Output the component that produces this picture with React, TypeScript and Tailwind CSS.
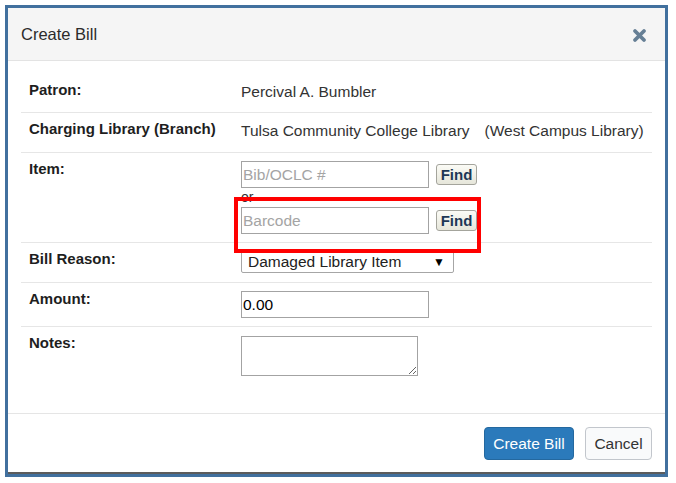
const font = { fontFamily: '"Liberation Sans", Arial, sans-serif' }

function Row({
  label,
  h,
  lpt,
  vpt,
  last = false,
  children,
}: {
  label: string
  h: string
  lpt: string
  vpt: string
  last?: boolean
  children: React.ReactNode
}) {
  return (
    <div className={`flex ${h} ${last ? '' : 'border-b border-[#e6e6e6]'}`}>
      <div className={`w-[220px] pl-[8px] ${lpt} text-[15px] leading-[20px] font-bold text-[#1e1e1e]`}>{label}</div>
      <div className={`flex-1 ${vpt} text-[15.5px] leading-[20px] text-[#333]`}>{children}</div>
    </div>
  )
}

function FindButton() {
  return (
    <button className="h-[21px] w-[41px] rounded-[3px] border border-[#a4a49c] bg-gradient-to-b from-[#fbfbf6] to-[#e6e6da] text-[15px] leading-[18px] font-bold text-[#1d3756]">
      Find
    </button>
  )
}

function TextBox({ placeholder, value }: { placeholder?: string; value?: string }) {
  return (
    <input
      readOnly
      placeholder={placeholder}
      defaultValue={value}
      className="block h-[27px] w-[188px] border border-[#a3a3a3] bg-white px-[1px] text-[15.5px] text-black placeholder:text-[#a4a4a4] outline-none"
      style={font}
    />
  )
}

export default function App() {
  return (
    <div className="w-[676px] h-[483px] bg-white pt-[5px] pl-[5px]" style={font}>
      <div className="w-[663px] h-[472px] border-[3px] border-[#41709e] bg-white flex flex-col">
        <div className="flex-1 flex flex-col border-b-2 border-[#5c5c5c]">
          {/* Header */}
          <div className="h-[53px] shrink-0 bg-[#f5f5f5] border-b border-[#e3e3e3] flex items-center justify-between pl-[13px] pr-[18px]">
            <span className="text-[16.5px] text-[#2b2b2b]">Create Bill</span>
            <svg width="15" height="15" viewBox="0 0 15 15" className="mt-[2px]">
              <path d="M3 3 L12 12 M12 3 L3 12" stroke="#667f95" strokeWidth="3.8" strokeLinecap="round" />
            </svg>
          </div>

          {/* Body */}
          <div className="h-[352px] shrink-0 px-[13px] pt-[11px]">
            <Row label="Patron:" h="h-[41px]" lpt="pt-[8px]" vpt="pt-[10px]">
              Percival A. Bumbler
            </Row>
            <Row label="Charging Library (Branch)" h="h-[40px]" lpt="pt-[6px]" vpt="pt-[8px]">
              <span>Tulsa Community College Library</span>
              <span className="ml-[15px]">(West Campus Library)</span>
            </Row>
            <Row label="Item:" h="h-[90px]" lpt="pt-[6px]" vpt="pt-[8px]">
              <div className="flex items-center gap-[7px]">
                <TextBox placeholder="Bib/OCLC #" />
                <FindButton />
              </div>
              <div className="h-[19px] text-[14px] leading-[19px] text-[#333]">or</div>
              <div className="relative flex items-center gap-[7px]">
                <TextBox placeholder="Barcode" />
                <FindButton />
                <div className="absolute left-[-7px] top-[-10px] w-[247px] h-[56px] border-[4px] border-[#ff0000]" />
              </div>
            </Row>
            <Row label="Bill Reason:" h="h-[40px]" lpt="pt-[6px]" vpt="pt-[7px]">
              <div className="flex h-[23px] w-[213px] items-center justify-between rounded-[2px] border border-[#a6a6a6] bg-white pl-[6px] pr-[8px] text-[15.5px] text-[#222]">
                <span>Damaged Library Item</span>
                <span className="text-[12px] leading-none text-black">▼</span>
              </div>
            </Row>
            <Row label="Amount:" h="h-[44px]" lpt="pt-[6px]" vpt="pt-[8px]">
              <TextBox value="0.00" />
            </Row>
            <Row label="Notes:" h="h-[60px]" lpt="pt-[6px]" vpt="pt-[9px]" last>
              <textarea
                readOnly
                className="block h-[40px] w-[177px] border border-[#a3a3a3] bg-white outline-none"
              />
            </Row>
          </div>

          {/* Footer */}
          <div className="flex-1 border-t border-[#e5e5e5] flex justify-end items-start gap-[11px] pt-[13px] pr-[13px]">
            <button className="h-[33px] w-[90px] rounded-[4px] border border-[#24689f] bg-[#2b7abb] text-[15.5px] text-white">
              Create Bill
            </button>
            <button className="h-[33px] w-[67px] rounded-[4px] border border-[#c2c6cc] bg-[#f9fafb] text-[15.5px] text-[#333]">
              Cancel
            </button>
          </div>
        </div>
      </div>
    </div>
  )
}
